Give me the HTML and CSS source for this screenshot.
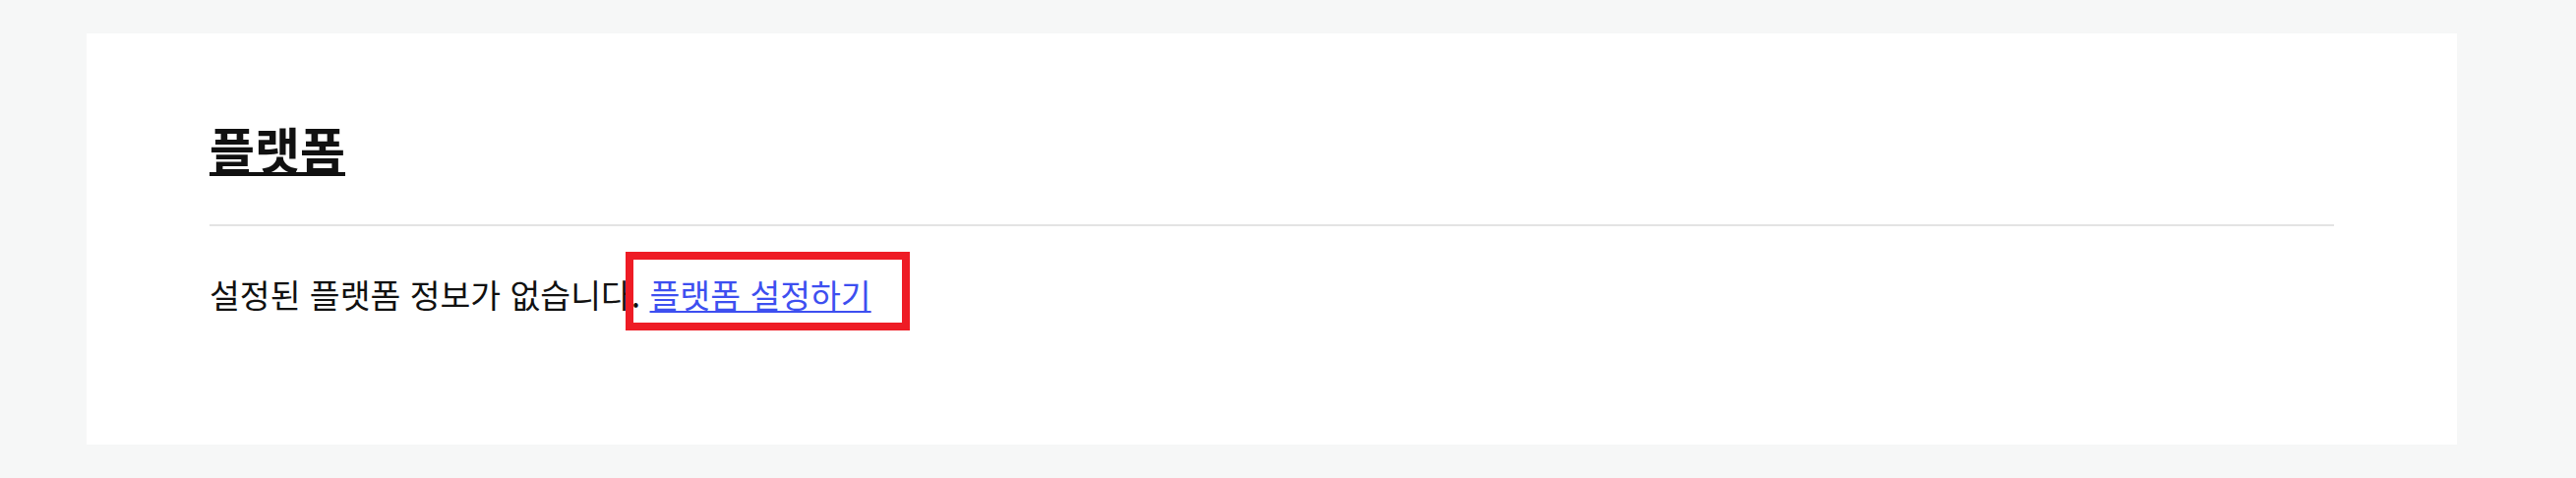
FILE: index.html
```html
<!DOCTYPE html>
<html lang="ko">
<head>
<meta charset="utf-8">
<title>플랫폼</title>
<link rel="stylesheet" href="styles.css">
</head>
<body>
<main class="page">
  <section class="card">
    <h2 class="title">플랫폼</h2>
    <hr class="divider">
    <p class="message">설정된 플랫폼 정보가 없습니다<span class="mark-wrap">. <a class="link" href="#">플랫폼 설정하기</a><span class="highlight"></span></span></p>
  </section>
</main>
</body>
</html>
```

FILE: styles.css
```css
html, body {
  margin: 0;
  padding: 0;
}
body {
  background: #f6f7f7;
  font-family: "Noto Sans CJK KR", "Noto Sans", sans-serif;
  color: #111111;
}
.page {
  padding: 34px 121px 34px 88px;
}
.card {
  background: #ffffff;
  height: 418px;
  box-sizing: border-box;
  padding: 88px 125px 0;
}
.title {
  margin: 0;
  font-size: 50px;
  line-height: 56px;
  font-weight: 700;
  text-decoration: underline;
  text-decoration-thickness: 4px;
  text-underline-offset: 3px;
  display: inline-block;
}
.divider {
  border: 0;
  height: 2px;
  background: #e3e3e3;
  margin: 50px 0 0;
}
.message {
  margin: 48px 0 0;
  font-size: 33.5px;
  line-height: 42px;
  word-spacing: 0;
  color: #111111;
}
.mark-wrap {
  position: relative;
}
.link {
  color: #3d4ff0;
  text-decoration: underline;
  text-decoration-thickness: 2px;
  text-underline-offset: 3px;
}
.highlight {
  position: absolute;
  left: -6px;
  top: -18px;
  width: 289px;
  height: 80px;
  box-sizing: border-box;
  border: 8px solid #ee1c25;
  pointer-events: none;
}
```
